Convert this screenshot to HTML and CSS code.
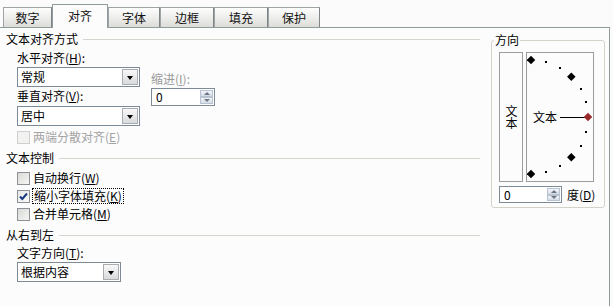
FILE: index.html
```html
<!DOCTYPE html>
<html lang="zh">
<head>
<meta charset="utf-8">
<link rel="stylesheet" href="styles.css">
</head>
<body>
<div class="tabs">
  <div class="tab t1">数字</div>
  <div class="tab active t2">对齐</div>
  <div class="tab t3">字体</div>
  <div class="tab t4">边框</div>
  <div class="tab t5">填充</div>
  <div class="tab t6">保护</div>
</div>
<div class="panel">
  <div class="left">
    <div class="gh first"><span>文本对齐方式</span></div>
    <div class="row1 ind">
      <div class="col1">
        <div class="lbl">水平对齐(<u>H</u>):</div>
        <div class="sel s-top"><span>常规</span><b class="dd"></b></div>
        <div class="lbl l2">垂直对齐(<u>V</u>):</div>
        <div class="sel s-mid"><span>居中</span><b class="dd"></b></div>
      </div>
      <div class="col2">
        <div class="lbl dim l3">缩进(<u>I</u>):</div>
        <div class="spin sp1"><span>0</span><b class="sb"><i class="up"></i><i class="dn"></i></b></div>
      </div>
    </div>
    <div class="chk ind dis c0"><i class="box"></i><span>两端分散对齐(<u>E</u>)</span></div>
    <div class="gh g2"><span>文本控制</span></div>
    <div class="chk ind c1"><i class="box"></i><span>自动换行(<u>W</u>)</span></div>
    <div class="chk ind c2"><i class="box on"><svg width="11" height="11" viewBox="0 0 11 11"><path d="M2 5.5 L4.3 8 L9 2.5" fill="none" stroke="#1a3a80" stroke-width="2"/></svg></i><span class="focus">缩小字体填充(<u>K</u>)</span></div>
    <div class="chk ind c2"><i class="box"></i><span>合并单元格(<u>M</u>)</span></div>
    <div class="gh g2"><span>从右到左</span></div>
    <div class="ind">
      <div class="lbl l4">文字方向(<u>T</u>):</div>
      <div class="sel s-bot"><span>根据内容</span><b class="dd"></b></div>
    </div>
  </div>
  <div class="right">
    <fieldset class="dir">
      <legend>方向</legend>
      <div class="boxes">
        <div class="vbox"><span class="vtext">文本</span></div>
        <div class="dial">
          <svg class="dots" width="66" height="128" viewBox="0 0 66 128">
            <g fill="#000">
              <rect x="1" y="4" width="6" height="6" transform="rotate(45 4 7)"/>
              <rect x="18" y="8" width="2" height="2"/>
              <rect x="32" y="14" width="2" height="2"/>
              <rect x="41.3" y="20.7" width="6" height="6" transform="rotate(45 44.3 23.7)"/>
              <rect x="53" y="35" width="2" height="2"/>
              <rect x="58" y="48" width="2" height="2"/>
              <rect x="58" y="78" width="2" height="2"/>
              <rect x="53" y="92" width="2" height="2"/>
              <rect x="41.3" y="101.3" width="6" height="6" transform="rotate(45 44.3 104.3)"/>
              <rect x="32" y="112" width="2" height="2"/>
              <rect x="18" y="118" width="2" height="2"/>
              <rect x="1" y="118" width="6" height="6" transform="rotate(45 4 121)"/>
            </g>
            <line x1="33" y1="64.5" x2="59" y2="64.5" stroke="#000" stroke-width="1"/>
            <rect x="58" y="61" width="6" height="6" fill="#9a2a2a" transform="rotate(45 61 64)"/>
          </svg>
          <span class="dtext">文本</span>
        </div>
      </div>
      <div class="deg">
        <div class="spin sp2"><span>0</span><b class="sb"><i class="up"></i><i class="dn"></i></b></div>
        <span class="dlbl">度(<u>D</u>)</span>
      </div>
    </fieldset>
  </div>
</div>
</body>
</html>
```

FILE: styles.css
```css
* { box-sizing: border-box; }
html, body { margin: 0; padding: 0; }
body {
  width: 613px;
  height: 306px;
  overflow: hidden;
  background: #fbfbfb;
  font: 12px/14px "Noto Sans CJK SC", "Noto Sans", sans-serif;
  color: #000;
}
u { text-decoration: underline; }

/* tabs */
.tabs {
  display: flex;
  align-items: flex-end;
  height: 28px;
  width: 610px;
  padding-left: 3px;
  border-bottom: 1px solid #919b9c;
}
.tab {
  height: 20px;
  border: 1px solid #9ea3a6;
  border-bottom: 0;
  border-right-color: #7f8487;
  background: linear-gradient(#fefefe, #ececea 55%, #dcdcd8);
  text-align: center;
  line-height: 19px;
  font-size: 12px;
  color: #111;
}
.t1 { width: 49px; }
.t2 { width: 56px; }
.t3 { width: 52px; }
.t4 { width: 54px; }
.t5 { width: 54px; }
.t6 { width: 52px; }
.tab.active {
  height: 24px;
  margin-bottom: -1px;
  background: #fcfcfd;
  border-color: #919b9c;
  line-height: 21px;
  position: relative;
  z-index: 1;
}

/* panel */
.panel {
  display: flex;
  width: 610px;
  height: 278px;
  border-right: 1px solid #919b9c;
  background: #fcfcfd;
}
.left { width: 491px; padding-top: 4px; }
.gh {
  display: flex;
  align-items: center;
  height: 14px;
  padding-left: 6px;
  margin-right: 11px;
}
.gh::after {
  content: "";
  flex: 1;
  border-top: 1px solid #d6d6ce;
  margin-left: 5px;
}
.g2 { margin-top: 7px; }
.ind { padding-left: 17px; }
.lbl { height: 14px; white-space: nowrap; }
.dim { color: #9a9a9a; }
.row1 { display: flex; margin-top: 5px; }
.col1 { width: 123px; }
.col2 { margin-left: 11px; }
.l2 { margin-top: 2px; }
.l3 { margin-top: 21px; }
.l4 { margin-top: 4px; }

/* select */
.sel {
  display: flex;
  height: 20px;
  border: 1px solid #7d8a97;
  background: #fff;
}
.sel span { flex: 1; padding-left: 3px; line-height: 18px; }
.s-top { margin-top: 2px; }
.s-mid { margin-top: 3px; }
.s-bot { margin-top: 2px; width: 104px; }
.dd {
  width: 16px;
  margin: 1px;
  border: 1px solid #a9acb0;
  background: linear-gradient(#f8f8f8, #d9dadc);
  display: flex;
  align-items: center;
  justify-content: center;
}
.dd::before {
  content: "";
  border-left: 3px solid transparent;
  border-right: 3px solid transparent;
  border-top: 4px solid #000;
  margin-top: 1px;
}

/* spin */
.spin {
  display: flex;
  height: 18px;
  border: 1px solid #7d8a97;
  background: #fff;
}
.spin span { flex: 1; padding-left: 4px; line-height: 16px; }
.sp1 { width: 64px; margin-top: 2px; }
.sb {
  width: 13px;
  margin: 1px;
  display: flex;
  flex-direction: column;
}
.sb i {
  flex: 1;
  border: 1px solid #b8c2d0;
  background: linear-gradient(#f3f5f9, #d6dce6);
  display: flex;
  align-items: center;
  justify-content: center;
}
.sb .up::before {
  content: "";
  border-left: 3px solid transparent;
  border-right: 3px solid transparent;
  border-bottom: 3px solid #6d7687;
}
.sb .dn::before {
  content: "";
  border-left: 3px solid transparent;
  border-right: 3px solid transparent;
  border-top: 3px solid #6d7687;
}

/* checkboxes */
.chk { display: flex; align-items: center; height: 14px; }
.c0 { margin-top: 4px; }
.c1 { margin-top: 6px; }
.c2 { margin-top: 4px; }
.box {
  width: 13px;
  height: 13px;
  border: 1px solid #8c9097;
  background: linear-gradient(135deg, #d9d9d6, #f6f6f4);
  margin-right: 3px;
  display: flex;
  align-items: center;
  justify-content: center;
}
.box.on { background: linear-gradient(135deg, #e6e6e3, #fbfbfa); }
.dis { color: #a3a3a3; }
.dis .box { border-color: #cfcfcf; background: #f2f2f0; }
.focus { outline: 1px dotted #000; outline-offset: 0; padding: 0 1px; }

/* right */
.right { padding-top: 5px; }
.dir {
  margin: 0;
  width: 113px;
  border: 1px solid #d3d3c9;
  border-radius: 3px;
  padding: 5px 9px 4px 7px;
}
.dir legend {
  padding: 0 1px;
  margin-left: -5px;
  line-height: 14px;
}
.boxes { display: flex; gap: 3px; }
.vbox {
  width: 24px;
  height: 130px;
  border: 1px solid #9c9c9c;
  display: flex;
  align-items: center;
  justify-content: center;
}
.vtext {
  writing-mode: vertical-rl;
  text-orientation: upright;
  line-height: 14px;
}
.dial {
  position: relative;
  width: 68px;
  height: 130px;
  border: 1px solid #9c9c9c;
}
.dots { display: block; }
.dtext {
  position: absolute;
  left: 6px;
  top: 57px;
  line-height: 14px;
}
.deg { display: flex; align-items: center; margin-top: 4px; }
.sp2 { width: 63px; height: 17px; }
.sp2 span { line-height: 15px; }
.dlbl { margin-left: 5px; white-space: nowrap; }
```
